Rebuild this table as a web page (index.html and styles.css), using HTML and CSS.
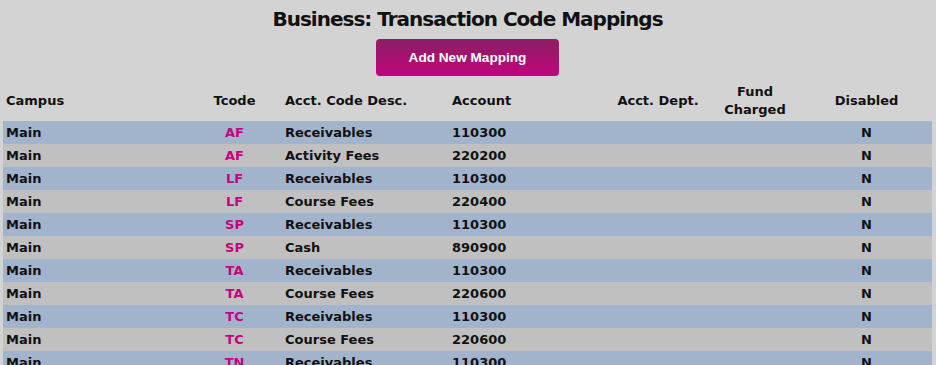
FILE: index.html
```html
<!DOCTYPE html>
<html>
<head>
<meta charset="utf-8">
<link rel="stylesheet" href="styles.css">
</head>
<body>
<div class="page">
  <h1 class="title">Business: Transaction Code Mappings</h1>
  <div class="actions"><button class="add-btn">Add New Mapping</button></div>
  <table class="grid">
    <colgroup>
      <col class="w1"><col class="w2"><col class="w3"><col class="w4"><col class="w5"><col class="w6"><col class="w7">
    </colgroup>
    <thead>
      <tr>
        <th class="c1">Campus</th>
        <th class="c2">Tcode</th>
        <th class="c3">Acct. Code Desc.</th>
        <th class="c4">Account</th>
        <th class="c5">Acct. Dept.</th>
        <th class="c6">Fund<br>Charged</th>
        <th class="c7">Disabled</th>
      </tr>
    </thead>
    <tbody>
      <tr><td class="c1">Main</td><td class="c2 code">AF</td><td class="c3">Receivables</td><td class="c4">110300</td><td class="c5"></td><td class="c6"></td><td class="c7">N</td></tr>
      <tr><td class="c1">Main</td><td class="c2 code">AF</td><td class="c3">Activity Fees</td><td class="c4">220200</td><td class="c5"></td><td class="c6"></td><td class="c7">N</td></tr>
      <tr><td class="c1">Main</td><td class="c2 code">LF</td><td class="c3">Receivables</td><td class="c4">110300</td><td class="c5"></td><td class="c6"></td><td class="c7">N</td></tr>
      <tr><td class="c1">Main</td><td class="c2 code">LF</td><td class="c3">Course Fees</td><td class="c4">220400</td><td class="c5"></td><td class="c6"></td><td class="c7">N</td></tr>
      <tr><td class="c1">Main</td><td class="c2 code">SP</td><td class="c3">Receivables</td><td class="c4">110300</td><td class="c5"></td><td class="c6"></td><td class="c7">N</td></tr>
      <tr><td class="c1">Main</td><td class="c2 code">SP</td><td class="c3">Cash</td><td class="c4">890900</td><td class="c5"></td><td class="c6"></td><td class="c7">N</td></tr>
      <tr><td class="c1">Main</td><td class="c2 code">TA</td><td class="c3">Receivables</td><td class="c4">110300</td><td class="c5"></td><td class="c6"></td><td class="c7">N</td></tr>
      <tr><td class="c1">Main</td><td class="c2 code">TA</td><td class="c3">Course Fees</td><td class="c4">220600</td><td class="c5"></td><td class="c6"></td><td class="c7">N</td></tr>
      <tr><td class="c1">Main</td><td class="c2 code">TC</td><td class="c3">Receivables</td><td class="c4">110300</td><td class="c5"></td><td class="c6"></td><td class="c7">N</td></tr>
      <tr><td class="c1">Main</td><td class="c2 code">TC</td><td class="c3">Course Fees</td><td class="c4">220600</td><td class="c5"></td><td class="c6"></td><td class="c7">N</td></tr>
      <tr><td class="c1">Main</td><td class="c2 code">TN</td><td class="c3">Receivables</td><td class="c4">110300</td><td class="c5"></td><td class="c6"></td><td class="c7">N</td></tr>
    </tbody>
  </table>
</div>
</body>
</html>
```
FILE: styles.css
```css
html, body {
  margin: 0;
  padding: 0;
  background: #d3d3d3;
}
body {
  font-family: "DejaVu Sans", sans-serif;
  font-weight: bold;
  color: #111;
  overflow: hidden;
}
.page {
  padding: 0 4px 0 3px;
}
.title {
  margin: 0;
  padding-top: 7px;
  font-size: 20px;
  line-height: 24px;
  letter-spacing: -1px;
  text-align: center;
  font-weight: bold;
  color: #111;
}
.actions {
  display: flex;
  justify-content: center;
  padding-top: 8px;
}
.add-btn {
  width: 183px;
  height: 37px;
  border: 0;
  border-radius: 4px;
  background: linear-gradient(to bottom, #8a1f63, #c2047e);
  color: #fff;
  font-family: "Liberation Sans", Arial, sans-serif;
  font-weight: bold;
  font-size: 13.6px;
  padding: 0;
}
.grid {
  width: 929px;
  border-collapse: collapse;
  table-layout: fixed;
  margin-top: 4px;
  font-size: 13px;
}
.w1 { width: 190px; }
.w2 { width: 83px; }
.w3 { width: 167px; }
.w4 { width: 172px; }
.w5 { width: 86px; }
.w6 { width: 108px; }
.w7 { width: 123px; }
.grid th {
  height: 41px;
  padding: 0;
  font-size: 13px;
  line-height: 18px;
  vertical-align: middle;
}
.grid td {
  height: 23px;
  padding: 0;
  line-height: 23px;
  white-space: nowrap;
}
.c1 { text-align: left; padding-left: 3px !important; }
.c2 { text-align: center; }
.c3, .c4 { text-align: left; padding-left: 9px !important; }
.c5, .c6 { text-align: center; }
.c7 { text-align: center; padding-right: 8px !important; }
.grid tbody tr:nth-child(odd) { background: #a2b4cc; }
.grid tbody tr:nth-child(even) { background: #c0c0c0; }
.code { color: #c8007e; }
```
